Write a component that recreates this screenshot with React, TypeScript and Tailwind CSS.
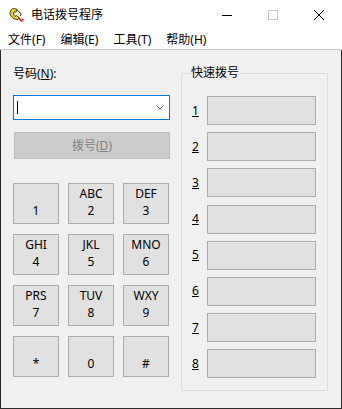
import React from "react";

const FONT = { fontFamily: '"Noto Sans", "Noto Sans CJK SC", sans-serif' };

const PhoneIcon = () => (
  <svg width="17" height="16" viewBox="0 0 17 16">
    <path
      d="M2 6 C2 3 4 1.5 6.5 1.5 L9 2.5 L8 5 L6 5 C5 6 5.5 8 7 9.5 L8.5 8.5 L11 10.5 L10 12.5 C6.5 13 2.5 10 2 6 Z"
      fill="#f2d21b"
      stroke="#3a3a1a"
      strokeWidth="1"
    />
    <path d="M9 3 L13 6.5 L12.5 9" fill="none" stroke="#3a3a1a" strokeWidth="1" />
    <path d="M11 11 L13.5 14 L15.5 12" fill="none" stroke="#d8242a" strokeWidth="1.6" />
  </svg>
);

const keys: [string, string][] = [
  ["", "1"],
  ["ABC", "2"],
  ["DEF", "3"],
  ["GHI", "4"],
  ["JKL", "5"],
  ["MNO", "6"],
  ["PRS", "7"],
  ["TUV", "8"],
  ["WXY", "9"],
  ["", "*"],
  ["", "0"],
  ["", "#"],
];

const menus: [string, string][] = [
  ["文件", "F"],
  ["编辑", "E"],
  ["工具", "T"],
  ["帮助", "H"],
];

export default function App() {
  return (
    <div className="flex h-[409px] w-[342px] flex-col bg-white text-[12px] text-black" style={FONT}>
      {/* title bar */}
      <div className="flex h-[30px] items-center">
        <div className="ml-[8px] flex items-center">
          <PhoneIcon />
        </div>
        <span className="ml-[6px]">电话拨号程序</span>
        <div className="ml-auto flex h-full">
          <div className="flex w-[46px] items-center justify-center">
            <svg width="10" height="10" viewBox="0 0 10 10">
              <path d="M0 5.5 H10" stroke="#000" strokeWidth="1" />
            </svg>
          </div>
          <div className="flex w-[46px] items-center justify-center">
            <svg width="10" height="10" viewBox="0 0 10 10">
              <rect x="0.5" y="0.5" width="9" height="9" fill="none" stroke="#c6c6c6" strokeWidth="1" />
            </svg>
          </div>
          <div className="flex w-[46px] items-center justify-center">
            <svg width="10" height="10" viewBox="0 0 10 10">
              <path d="M0 0 L10 10 M10 0 L0 10" stroke="#000" strokeWidth="1" />
            </svg>
          </div>
        </div>
      </div>

      {/* menu bar */}
      <div className="flex h-[20px] items-center gap-[15px] border-b border-[#c9c9c9] pl-[8px]">
        {menus.map(([t, k]) => (
          <span key={k}>
            {t}({k})
          </span>
        ))}
      </div>

      {/* client area */}
      <div className="flex flex-1 border-x border-b border-[#2b2b2b] bg-[#f0f0f0]">
        <div className="flex w-[170px] flex-col pl-[12px] pt-[16px]">
          <div className="leading-[16px]">
            号码(<span className="underline">N</span>):
          </div>
          <div className="relative mt-[13px] flex h-[25px] w-[157px] items-center border border-[#0078d7] bg-white">
            <span className="ml-[3px] h-[13px] w-px bg-black" />
            <svg className="ml-auto mr-[5px]" width="8" height="5" viewBox="0 0 8 5">
              <path d="M0.5 0.5 L4 4 L7.5 0.5" fill="none" stroke="#606060" strokeWidth="1" />
            </svg>
          </div>
          <div className="ml-px mt-[12px] flex h-[27px] w-[156px] items-center justify-center border border-[#bfbfbf] bg-[#cccccc] text-[#838383]">
            拨号(<span className="underline">D</span>)
          </div>
          <div className="mt-[24px] grid grid-cols-[46px_46px_46px] gap-x-[9px] gap-y-[10px]">
            {keys.map(([l, d]) => (
              <div
                key={d}
                className="flex h-[41px] flex-col items-center justify-end border border-[#adadad] bg-[#e1e1e1] pb-[4px] leading-[17px]"
              >
                {l && <span>{l}</span>}
                <span>{d}</span>
              </div>
            ))}
          </div>
        </div>

        <div className="relative ml-[10px] mt-[23px] h-[318px] w-[147px] border border-[#dcdcdc]">
          <span className="absolute left-[8px] top-[-9px] bg-[#f0f0f0] px-px leading-[16px]">快速拨号</span>
          <div className="flex flex-col gap-[7.2px] pl-[10px] pt-[22px]">
            {[1, 2, 3, 4, 5, 6, 7, 8].map((n) => (
              <div key={n} className="flex items-center">
                <span className="w-[15px] underline">{n}</span>
                <div className="h-[29px] w-[109px] border border-[#adadad] bg-[#e1e1e1]" />
              </div>
            ))}
          </div>
        </div>
      </div>
    </div>
  );
}
